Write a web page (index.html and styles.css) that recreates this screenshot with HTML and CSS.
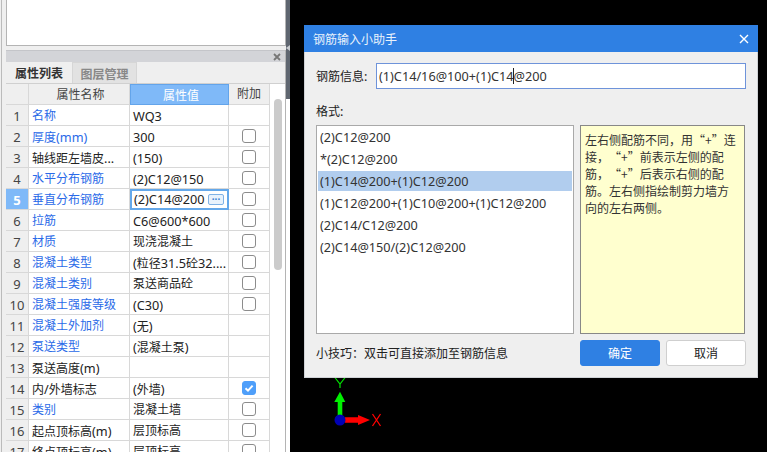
FILE: index.html
```html
<!DOCTYPE html>
<html lang="zh">
<head>
<meta charset="utf-8">
<title>钢筋输入小助手</title>
<link rel="stylesheet" href="styles.css">
</head>
<body>
<div class="app">
  <aside class="side">
    <div class="blank"></div>
    <section class="panel">
      <div class="grip"><svg width="8" height="8" viewBox="0 0 8 8"><path d="M1 1 7 7M7 1 1 7" stroke="#777" stroke-width="1.8"/></svg></div>
      <div class="tabs"><div class="tab active">属性列表</div><div class="tab">图层管理</div></div>
      <div class="table-wrap">
        <div class="grid">
          <div class="c num head"></div><div class="c name head ctr">属性名称</div><div class="c val headsel ctr">属性值</div><div class="c add head ctr">附加</div>
          <div class="c num">1</div><div class="c name blue">名称</div><div class="c val"><span class="lat">WQ3</span></div><div class="c add"></div>
          <div class="c num">2</div><div class="c name blue">厚度<span class="lat">(mm)</span></div><div class="c val"><span class="lat">300</span></div><div class="c add"><i class="cb"></i></div>
          <div class="c num">3</div><div class="c name">轴线距左墙皮<span class="lat">...</span></div><div class="c val"><span class="lat">(150)</span></div><div class="c add"><i class="cb"></i></div>
          <div class="c num">4</div><div class="c name blue">水平分布钢筋</div><div class="c val"><span class="lat">(2)C12@150</span></div><div class="c add"><i class="cb"></i></div>
          <div class="c num numsel">5</div><div class="c name blue">垂直分布钢筋</div><div class="c val editing"><span class="lat">(2)C14@200</span><b class="more">···</b></div><div class="c add"><i class="cb"></i></div>
          <div class="c num">6</div><div class="c name blue">拉筋</div><div class="c val"><span class="lat">C6@600*600</span></div><div class="c add"><i class="cb"></i></div>
          <div class="c num">7</div><div class="c name blue">材质</div><div class="c val">现浇混凝土</div><div class="c add"><i class="cb"></i></div>
          <div class="c num">8</div><div class="c name blue">混凝土类型</div><div class="c val"><span class="lat">(</span>粒径<span class="lat">31.5</span>砼<span class="lat">32....</span></div><div class="c add"><i class="cb"></i></div>
          <div class="c num">9</div><div class="c name blue">混凝土类别</div><div class="c val">泵送商品砼</div><div class="c add"><i class="cb"></i></div>
          <div class="c num">10</div><div class="c name blue">混凝土强度等级</div><div class="c val"><span class="lat">(C30)</span></div><div class="c add"><i class="cb"></i></div>
          <div class="c num">11</div><div class="c name blue">混凝土外加剂</div><div class="c val"><span class="lat">(</span>无<span class="lat">)</span></div><div class="c add"></div>
          <div class="c num">12</div><div class="c name blue">泵送类型</div><div class="c val"><span class="lat">(</span>混凝土泵<span class="lat">)</span></div><div class="c add"></div>
          <div class="c num">13</div><div class="c name">泵送高度<span class="lat">(m)</span></div><div class="c val"></div><div class="c add"></div>
          <div class="c num">14</div><div class="c name">内<span class="lat">/</span>外墙标志</div><div class="c val"><span class="lat">(</span>外墙<span class="lat">)</span></div><div class="c add"><i class="cb on"><svg viewBox="0 0 14 14" width="14" height="14"><path d="M3.5 7.2 6 9.6 10.6 4.6" fill="none" stroke="#fff" stroke-width="2"/></svg></i></div>
          <div class="c num">15</div><div class="c name blue">类别</div><div class="c val">混凝土墙</div><div class="c add"><i class="cb"></i></div>
          <div class="c num">16</div><div class="c name">起点顶标高<span class="lat">(m)</span></div><div class="c val">层顶标高</div><div class="c add"><i class="cb"></i></div>
          <div class="c num">17</div><div class="c name">终点顶标高<span class="lat">(m)</span></div><div class="c val">层顶标高</div><div class="c add"><i class="cb"></i></div>
        </div>
        <div class="scroll"><div class="thumb"></div></div>
      </div>
    </section>
  </aside>
  <div class="strip"><div class="strip-top"></div></div>
  <main class="canvas">
    <svg class="axis" width="60" height="70" viewBox="0 0 60 70">
      <path d="M5.5 1 11 8 16.5 1M11 8V12" fill="none" stroke="#00e600" stroke-width="1.2"/>
      <path d="M11 15.7 16.3 26H13.3V44H8.7V26H5.3Z" fill="#00f000"/>
      <path d="M16 41.3H29V39L41 44 29 49V46.7H16Z" fill="#ff0000"/>
      <circle cx="11" cy="44" r="5.5" fill="#0000b4"/>
      <path d="M43.5 38 51.5 50M51.5 38 43.5 50" fill="none" stroke="#ff0000" stroke-width="1.3"/>
    </svg>
    <div class="dialog">
      <header class="dlg-title"><span>钢筋输入小助手</span>
        <svg width="10" height="10" viewBox="0 0 10 10"><path d="M1 1 9 9M9 1 1 9" stroke="#fff" stroke-width="1.4"/></svg>
      </header>
      <div class="dlg-body">
        <div class="info-row">
          <label>钢筋信息<span class="lat">:</span></label>
          <div class="info-input lat"><span>(1)C14/16@100+(1)C14</span><i class="caret"></i><span>@200</span></div>
        </div>
        <div class="fmt-label">格式<span class="lat">:</span></div>
        <div class="fmt-row">
          <ul class="list lat">
            <li>(2)C12@200</li>
            <li>*(2)C12@200</li>
            <li class="sel">(1)C14@200+(1)C12@200</li>
            <li>(1)C12@200+(1)C10@200+(1)C12@200</li>
            <li>(2)C14/C12@200</li>
            <li>(2)C14@150/(2)C12@200</li>
          </ul>
          <div class="note">左右侧配筋不同，用“+”连接，“+”前表示左侧的配筋，“+”后表示右侧的配筋。左右侧指绘制剪力墙方向的左右两侧。</div>
        </div>
        <div class="foot">
          <div class="tip">小技巧：双击可直接添加至钢筋信息</div>
          <div class="btns"><button class="btn primary">确定</button><button class="btn">取消</button></div>
        </div>
      </div>
    </div>
  </main>
</div>
</body>
</html>
```
FILE: styles.css
```css
* { box-sizing: border-box; }
html, body { margin: 0; padding: 0; height: 100%; overflow: hidden; background: #000; }
body { font-family: "Noto Sans", "Noto Sans CJK SC", sans-serif; font-size: 12px; color: #222; }
.lat { font-size: 12.7px; }
.app { display: flex; width: 767px; height: 452px; overflow: hidden; }
.side { width: 286px; flex: none; background: linear-gradient(#bbb, #bbb) 1px 0 / 1px 100% no-repeat, #efefef; padding: 0 0 0 6px; display: flex; flex-direction: column; gap: 4px; }
.blank { height: 46px; flex: none; background: #fff; border: 1px solid #b4b4b4; border-top: 0; }
.panel { flex: 1; min-height: 0; display: flex; flex-direction: column; background: #efefef; border-right: 1px solid #b4b4b4; }
.grip { height: 12px; flex: none; background: #d3d4d8; border-top: 1px solid #c4c5c9; display: flex; align-items: center; justify-content: flex-end; padding-right: 4px; }
.tabs { height: 22px; flex: none; display: flex; border-bottom: 1px solid #d0d0d0; }
.tab { width: 65px; background: #e2e2e2; border: 1px solid #d6d6d6; border-bottom: 0; color: #888; font-weight: 700; text-align: center; line-height: 22px; padding-top: 1px; }
.tab.active { width: 66px; background: #efefef; color: #333; border: 0; }
.table-wrap { display: flex; flex: 1; min-height: 0; }
.grid { display: grid; width: 264px; flex: none; grid-template-columns: 23px 101px 99px 41px; grid-auto-rows: 21px; align-content: start; background: #fff; }
.c { border-right: 1px solid #d8d8d8; border-bottom: 1px solid #d8d8d8; padding-top: 1px; line-height: 20px; white-space: nowrap; overflow: hidden; color: #222; }
.num { background: #efefef; text-align: center; color: #444; font-size: 13px; }
.numsel { background: #7fb9f8; color: #fff; font-weight: 700; }
.head { background: #efefef; color: #444; }
.headsel { background: #7fb9f8; color: #fff; border: 1px solid #63a4ea; }
.ctr { text-align: center; }
.name, .val { padding-left: 3px; }
.blue { color: #2a6ae8; }
.add { display: flex; align-items: center; justify-content: center; padding-top: 0; }
.cb { display: block; width: 14px; height: 14px; border: 1px solid #8c8c8c; border-radius: 3px; background: #fff; }
.cb.on { background: #4f9ffa; border-color: #4f9ffa; }
.cb.on svg { display: block; margin: -1px; }
.editing { border: 2px solid #64a8ea; padding: 0 3px 0 2px; display: flex; align-items: center; justify-content: space-between; line-height: 17px; }
.more { width: 16px; height: 11px; border: 1px solid #7fb2e6; border-radius: 2px; background: #e8f2fc; color: #3a7fd0; font-size: 10px; line-height: 8px; text-align: center; font-weight: 700; }
.scroll { flex: 1; background: #fff; padding: 15px 3px 0 4px; }
.thumb { height: 171px; background: #cbcbcb; border-radius: 4px; }
.strip { width: 4px; flex: none; background: #fff; position: relative; }
.strip-top { height: 99px; background: #5f6670; }
.strip-top::after { content: ""; position: absolute; left: 0; top: 45px; border: 3px solid transparent; border-left: 0; border-right: 4px solid #c9ccd0; }
.canvas { flex: 1; position: relative; background: #000; }
.axis { position: absolute; left: 39px; top: 376px; }
.dialog { position: absolute; left: 14px; top: 25px; width: 454px; height: 353px; background: #efefef; border: 1px solid #cfd2d6; border-top: 0; display: flex; flex-direction: column; }
.dlg-title { height: 27px; flex: none; background: #2f80e3; color: #e9f2fc; display: flex; align-items: center; justify-content: space-between; padding: 0 9px; margin: 0 -1px; }
.dlg-body { flex: 1; padding: 11px; display: flex; flex-direction: column; }
.info-row { display: flex; align-items: center; gap: 8px; height: 26px; }
.info-row label { width: 52px; flex: none; white-space: nowrap; }
.info-input { flex: 1; height: 26px; background: #fff; border: 1px solid #6e93da; display: flex; align-items: center; padding-left: 2px; color: #333; }
.caret { display: block; width: 1px; height: 16px; background: #222; margin: 0 -1px 0 0; }
.fmt-label { margin-top: 14px; height: 17px; line-height: 17px; }
.fmt-row { display: flex; gap: 6px; margin-top: 5px; height: 209px; flex: none; }
.list { width: 258px; flex: none; margin: 0; padding: 1px 1px 0; list-style: none; background: #fff; border: 1px solid #a9a9a9; }
.list li { height: 20px; margin-bottom: 2px; line-height: 20px; padding-left: 2px; color: #333; white-space: nowrap; }
.list li.sel { background: #b1cdee; }
.note { width: 165px; flex: none; background: #ffffcf; border: 1px solid #888; padding: 5px 5px 0 4px; line-height: 17px; color: #333; font-family: "Noto Sans CJK SC", sans-serif; text-spacing-trim: space-all; }
.foot { display: flex; justify-content: space-between; align-items: center; margin-top: 6px; height: 26px; }
.btns { display: flex; gap: 6px; }
.btn { width: 80px; height: 26px; background: #fff; border: 1px solid #cfcfcf; border-radius: 3px; font: inherit; color: #222; padding: 0; }
.btn.primary { background: #2f80e3; border-color: #2f80e3; color: #fff; }
```
